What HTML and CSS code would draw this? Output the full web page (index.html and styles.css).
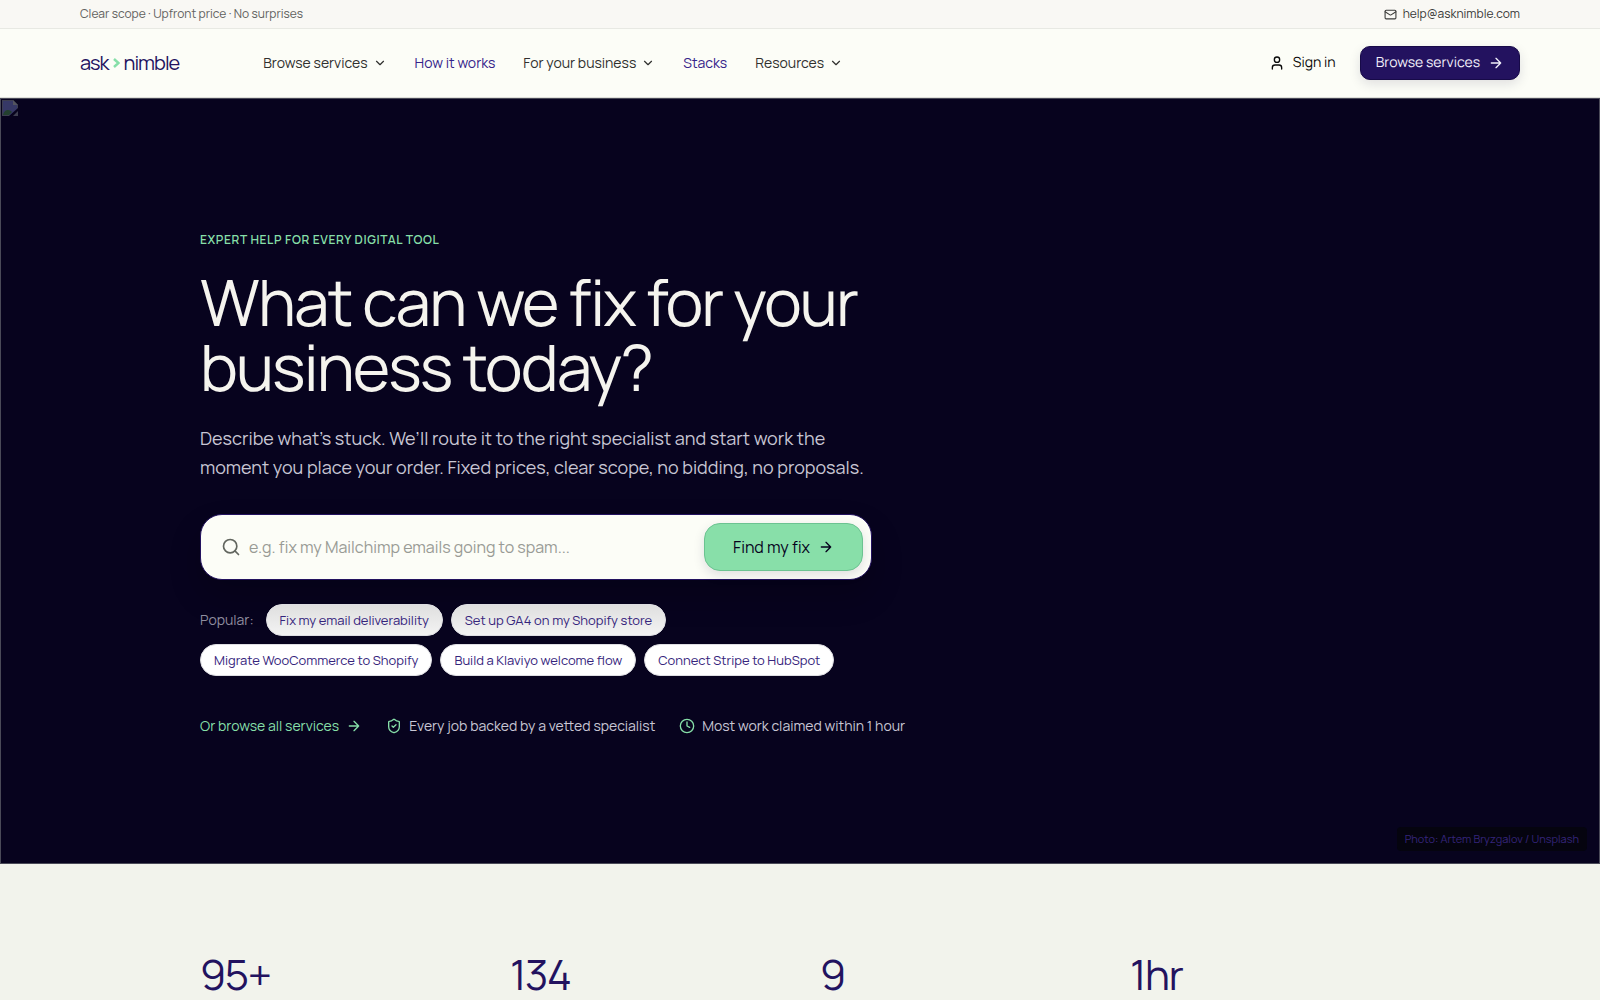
FILE: index.html
```html
<!DOCTYPE html>
<html lang="en">
<head>
  <meta charset="UTF-8">
  <meta name="viewport" content="width=device-width, initial-scale=1.0">
  <title>ask nimble</title>
  <link rel="stylesheet" href="styles.css">
</head>
<body>
  <div class="topbar">
    <span>Clear scope · Upfront price · No surprises</span>
    <a class="topbar-mail" href="mailto:help@asknimble.com">
      <svg class="icon icon-xs" viewBox="0 0 24 24"><rect x="2" y="4" width="20" height="16" rx="2"/><path d="m22 7-9 5.700a2 2 0 0 1-2 0L2 7"/></svg>
      help@asknimble.com
    </a>
  </div>

  <header class="header">
    <a class="logo" href="#">
      <span>ask</span>
      <svg class="logo-mark" viewBox="0 0 7 10"><path d="M1 1 5.500 5 1 9"/></svg>
      <span>nimble</span>
    </a>
    <nav class="nav">
      <button class="nav-item" type="button">Browse services
        <svg class="icon icon-sm" viewBox="0 0 24 24"><path d="m6 9 6 6 6-6"/></svg>
      </button>
      <a class="nav-item nav-link" href="#">How it works</a>
      <button class="nav-item" type="button">For your business
        <svg class="icon icon-sm" viewBox="0 0 24 24"><path d="m6 9 6 6 6-6"/></svg>
      </button>
      <a class="nav-item nav-link" href="#">Stacks</a>
      <button class="nav-item" type="button">Resources
        <svg class="icon icon-sm" viewBox="0 0 24 24"><path d="m6 9 6 6 6-6"/></svg>
      </button>
    </nav>
    <div class="actions">
      <a class="sign-in" href="#">
        <svg class="icon" viewBox="0 0 24 24"><path d="M19 21v-2a4 4 0 0 0-4-4H9a4 4 0 0 0-4 4v2"/><circle cx="12" cy="7" r="4"/></svg>
        Sign in
      </a>
      <a class="btn-primary" href="#">Browse services
        <svg class="icon" viewBox="0 0 24 24"><path d="M5 12h14M12 5l7 7-7 7"/></svg>
      </a>
    </div>
  </header>

  <main>
    <section class="hero">
      <svg class="hero-missing" viewBox="0 0 16 16">
        <path d="M0 0h11l5 5v11H0z" fill="#3d3e50"/>
        <path d="M1 1h10v4h4v6l-4 4H1z" fill="#363866"/>
        <path d="M1 15c1-4 3-5 5-5s3 1 4 2l-3 3z" fill="#23402f"/>
        <path d="M16 8v3l-5 5H7z" fill="#07031d"/>
        <path d="M11 0v5h5z" fill="#53545f"/>
      </svg>
      <div class="hero-inner">
        <p class="eyebrow">EXPERT HELP FOR EVERY DIGITAL TOOL</p>
        <h1>What can we fix for your<br>business today?</h1>
        <p class="lead">Describe what’s stuck. We’ll route it to the right specialist and start work the<br>moment you place your order. Fixed prices, clear scope, no bidding, no proposals.</p>
        <form class="search">
          <svg class="icon icon-lg" viewBox="0 0 24 24"><circle cx="11" cy="11" r="8"/><path d="m21 21-4.300-4.300"/></svg>
          <input type="text" aria-label="Describe your problem" placeholder="e.g. fix my Mailchimp emails going to spam...">
          <button class="btn-find" type="submit">Find my fix
            <svg class="icon" viewBox="0 0 24 24"><path d="M5 12h14M12 5l7 7-7 7"/></svg>
          </button>
        </form>
        <div class="popular">
          <span class="popular-label">Popular:</span>
          <button class="pill pill-shaded" type="button">Fix my email deliverability</button>
          <button class="pill pill-shaded" type="button">Set up GA4 on my Shopify store</button>
          <button class="pill" type="button">Migrate WooCommerce to Shopify</button>
          <button class="pill" type="button">Build a Klaviyo welcome flow</button>
          <button class="pill" type="button">Connect Stripe to HubSpot</button>
        </div>
        <div class="trust">
          <a class="trust-item trust-link" href="#">Or browse all services
            <svg class="icon" viewBox="0 0 24 24"><path d="M5 12h14M12 5l7 7-7 7"/></svg>
          </a>
          <span class="trust-item">
            <svg class="icon" viewBox="0 0 24 24"><path d="M20 13c0 5-3.500 7.500-7.700 9a1 1 0 0 1-.600 0C7.500 20.500 4 18 4 13V6a1 1 0 0 1 1-1c2 0 4.500-1.200 6.200-2.700a1.200 1.200 0 0 1 1.600 0C14.500 3.800 17 5 19 5a1 1 0 0 1 1 1z"/><path d="m9 12 2 2 4-4"/></svg>
            Every job backed by a vetted specialist
          </span>
          <span class="trust-item">
            <svg class="icon" viewBox="0 0 24 24"><circle cx="12" cy="12" r="10"/><path d="M12 6v6l4 2"/></svg>
            Most work claimed within 1 hour
          </span>
        </div>
      </div>
      <a class="credit" href="#">Photo: Artem Bryzgalov / Unsplash</a>
    </section>

    <section class="stats">
      <div class="stats-grid">
        <div class="stat">95+</div>
        <div class="stat">134</div>
        <div class="stat">9</div>
        <div class="stat">1hr</div>
      </div>
    </section>
  </main>
</body>
</html>
```

FILE: styles.css
```css
* {
  box-sizing: border-box;
}

body {
  margin: 0;
  font-family: Manrope, Inter, "Liberation Sans", sans-serif;
  font-size: 14px;
  line-height: 20px;
  color: #30302e;
  background-color: #f2f3ec;
}

a {
  color: inherit;
  text-decoration: none;
}

button,
input {
  font: inherit;
  color: inherit;
}

button {
  padding: 0;
  border: none;
  background: none;
  cursor: pointer;
}

h1,
p {
  margin: 0;
}

/* Icons */
.icon {
  width: 16px;
  height: 16px;
  flex: none;
  fill: none;
  stroke: currentColor;
  stroke-width: 2;
  stroke-linecap: round;
  stroke-linejoin: round;
}

.icon-xs {
  width: 13px;
  height: 13px;
}

.icon-sm {
  width: 14px;
  height: 14px;
}

.icon-lg {
  width: 20px;
  height: 20px;
  color: #62665f;
}

/* Top bar and header */
.topbar {
  display: flex;
  justify-content: space-between;
  align-items: center;
  height: 29px;
  padding: 0 80px;
  font-size: 12px;
  color: #62625f;
  background-color: #f9f8f4;
  border-bottom: 1px solid #e8e9e3;
}

.topbar-mail {
  display: flex;
  align-items: center;
  gap: 6px;
  color: #3a3a38;
}

.header {
  display: flex;
  align-items: center;
  height: 69px;
  padding: 0 80px;
  background-color: #fcfdf7;
  border-bottom: 1px solid #dedfd9;
}

.logo {
  display: flex;
  align-items: center;
  gap: 4px;
  margin-right: 84px;
  font-size: 20px;
  letter-spacing: -1px;
  color: #23125f;
}

.logo-mark {
  width: 7px;
  height: 10px;
  fill: none;
  stroke: #86dfa8;
  stroke-width: 2.5;
}

.nav {
  display: flex;
  gap: 28px;
}

.nav-item {
  display: flex;
  align-items: center;
  gap: 5px;
}

.nav-link {
  color: #35248a;
}

.actions {
  display: flex;
  align-items: center;
  gap: 24px;
  margin-left: auto;
  text-rendering: geometricPrecision;
}

.sign-in {
  display: flex;
  align-items: center;
  gap: 8px;
  color: #0a0a0a;
}

.btn-primary {
  display: flex;
  align-items: center;
  gap: 8px;
  height: 34px;
  padding: 0 15px;
  color: #f2f0fa;
  background-color: #23125f;
  border: 1px solid #170a48;
  border-radius: 10px;
  box-shadow: 0 4px 12px rgba(20, 10, 60, 0.12);
}

/* Hero */
.hero {
  position: relative;
  padding: 127px 24px;
  color: #c8c6d4;
  background-color: #07031e;
  border: 1px solid #4a4a58;
}

.hero-missing {
  position: absolute;
  top: 1px;
  left: 1px;
  width: 16px;
  height: 16px;
}

.hero-inner {
  max-width: 1200px;
  margin: 0 auto;
}

.eyebrow {
  font-size: 12px;
  font-weight: 600;
  line-height: 28px;
  letter-spacing: 0.05em;
  color: #86dfa8;
}

h1 {
  margin-top: 16px;
  font-size: 64px;
  font-weight: 400;
  line-height: 65px;
  letter-spacing: -0.03em;
  text-rendering: geometricPrecision;
  color: #f5f4ee;
}

.lead {
  margin-top: 24px;
  font-size: 18px;
  line-height: 29px;
}

.search {
  display: flex;
  align-items: center;
  gap: 8px;
  max-width: 672px;
  height: 66px;
  margin-top: 32px;
  padding: 0 8px 0 20px;
  background-color: #fcfdf7;
  border: 1px solid #23125f;
  border-radius: 22px;
  box-shadow: 0 16px 32px rgba(0, 0, 0, 0.2);
}

.search input {
  flex: 1;
  min-width: 0;
  padding: 0;
  font-size: 16px;
  color: #30302e;
  background: none;
  border: none;
  outline: none;
}

.search input::placeholder {
  color: #999b95;
}

.btn-find {
  display: flex;
  align-items: center;
  gap: 8px;
  height: 48px;
  padding: 0 28px;
  font-size: 16px;
  color: #06021d;
  background-color: #88dfa9;
  border: 1px solid #6cc391;
  border-radius: 16px;
  box-shadow: 0 4px 12px rgba(20, 10, 60, 0.12);
}

.popular {
  display: flex;
  flex-wrap: wrap;
  align-items: center;
  gap: 8px;
  max-width: 672px;
  margin-top: 24px;
}

.popular-label {
  margin-right: 4px;
  color: #8f8d9f;
}

.pill {
  height: 32px;
  padding: 0 13px;
  font-size: 13px;
  color: #35247c;
  background-color: #fff;
  border: 1px solid #dedee2;
  border-radius: 16px;
}

.pill-shaded {
  background-image: linear-gradient(#dfdfdf, #f3f3f3);
}

.trust {
  display: flex;
  flex-wrap: wrap;
  gap: 24px;
  margin-top: 40px;
}

.trust-item {
  display: flex;
  align-items: center;
  gap: 7px;
}

.trust-item .icon,
.trust-link {
  color: #86dfa8;
}

.credit {
  position: absolute;
  right: 12px;
  bottom: 12px;
  padding: 2px 8px;
  font-size: 11px;
  color: #35247c;
  background-color: #05040f;
  border-radius: 4px;
}

/* Stats */
.stats {
  padding: 88px 24px 0;
}

.stats-grid {
  display: grid;
  grid-template-columns: repeat(4, 1fr);
  gap: 40px;
  max-width: 1200px;
  margin: 0 auto;
}

.stat {
  font-size: 42px;
  line-height: 44px;
  letter-spacing: -0.03em;
  color: #23125f;
}
```
